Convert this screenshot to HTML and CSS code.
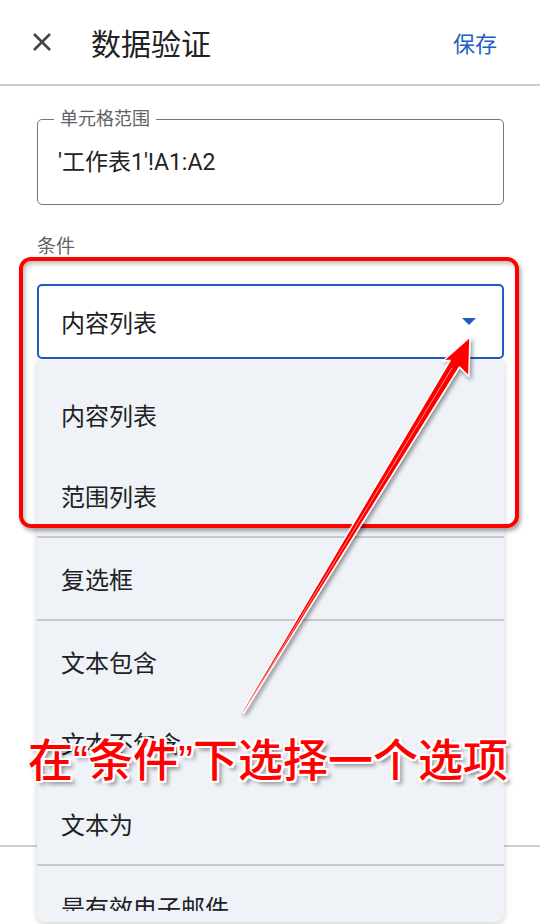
FILE: index.html
```html
<!DOCTYPE html>
<html lang="zh-CN">
<head>
    <meta charset="UTF-8">
    <meta name="viewport" content="width=device-width, initial-scale=1.0">
    <title>数据验证</title>
    <link rel="stylesheet" href="styles.css">
</head>
<body>
    <div class="page">
        <!-- Top bar -->
        <header class="topbar">
            <svg class="close-icon" width="20" height="20" viewBox="0 0 20 20">
                <path d="M2 2 L18 18 M18 2 L2 18" stroke="#444" stroke-width="2.6" fill="none"/>
            </svg>
            <h1 class="title">数据验证</h1>
            <button class="save-button">保存</button>
        </header>

        <main class="form">
            <fieldset class="range-field">
                <legend>单元格范围</legend>
                <div class="range-value">'工作表1'!A1:A2</div>
            </fieldset>

            <div class="field-label">条件</div>

            <div class="select-wrap">
                <div class="select-box">
                    <span>内容列表</span>
                    <span class="caret"></span>
                </div>

                <!-- Open dropdown -->
                <div class="menu">
                    <div class="menu-list">
                        <div class="menu-item">内容列表</div>
                        <div class="menu-item">范围列表</div>
                        <div class="menu-sep"></div>
                        <div class="menu-item">复选框</div>
                        <div class="menu-sep"></div>
                        <div class="menu-item">文本包含</div>
                        <div class="menu-item">文本不包含</div>
                        <div class="menu-item">文本为</div>
                        <div class="menu-sep"></div>
                        <div class="menu-item">是有效电子邮件</div>
                    </div>
                </div>
            </div>
        </main>

        <div class="footer-rule"></div>

        <!-- Annotations -->
        <div class="mark-box"></div>
        <svg class="mark-arrow" width="540" height="924" viewBox="0 0 540 924">
            <defs>
                <filter id="arrow-shadow" x="-20%" y="-20%" width="140%" height="140%">
                    <feDropShadow dx="2" dy="3" stdDeviation="2" flood-color="#000" flood-opacity="0.4"/>
                </filter>
            </defs>
            <polygon points="470,337 468.8,376.3 459.5,367 244,712.5 242,711.5 450,360.5 443.2,360.7"
                     fill="#ff0000" stroke="#fff" stroke-width="1.5" stroke-linejoin="round"
                     filter="url(#arrow-shadow)"/>
            <!-- highlight down the shaft -->
            <line x1="452" y1="368" x2="244" y2="711" stroke="#fff" stroke-width="0.8" opacity="0.7"/>
        </svg>
        <div class="mark-text">在“条件”下选择一个选项</div>
    </div>
</body>
</html>
```

FILE: styles.css
```css
body {
    margin: 0;
    font-family: Roboto, "Noto Sans CJK SC", sans-serif;
    background: #fff;
    color: #202124;
}

.page {
    position: relative;
    width: 540px;
    height: 924px;
    overflow: hidden;
}

.topbar {
    display: flex;
    align-items: center;
    height: 84px;
    padding: 0 43px 0 32px;
    border-bottom: 2px solid #cfcfcf;
}

.close-icon {
    display: block;
}

.title {
    flex: 1;
    margin: 0 0 0 39px;
    font-size: 30px;
    font-weight: 400;
    color: #222;
}

.save-button {
    border: none;
    background: none;
    padding: 0;
    font-family: inherit;
    font-size: 22px;
    color: #1f5ec6;
}

.form {
    padding: 0 36px 0 37px;
}

.range-field {
    margin: 23px 0 0;
    padding: 0 16px;
    min-width: 0;
    border: 1.5px solid #777;
    border-radius: 5px;
}

.range-field legend {
    padding: 0 6px;
    font-size: 18px;
    line-height: 20px;
    color: #5f6368;
}

.range-value {
    padding: 20px 4px 28px;
    font-size: 23px;
    line-height: 27px;
    color: #222;
}

.field-label {
    margin-top: 31px;
    font-size: 19px;
    line-height: 22px;
    color: #5f6368;
}

.select-wrap {
    position: relative;
    margin-top: 26px;
}

.select-box {
    display: flex;
    align-items: center;
    justify-content: space-between;
    height: 71px;
    padding: 0 26px 0 22px;
    border: 2px solid #1f5bc1;
    border-radius: 5px;
    font-size: 24px;
}

.caret {
    width: 0;
    height: 0;
    border-left: 7px solid transparent;
    border-right: 7px solid transparent;
    border-top: 7px solid #1f5bc1;
}

.menu {
    position: absolute;
    top: 76px;
    left: 0;
    right: 0;
    padding: 14px 0 11px;
    background: #eff2f7;
    border-radius: 0 0 8px 8px;
    box-shadow: 0 2px 6px rgba(0, 0, 0, 0.18);
}

.menu-list {
    height: 537px;
    overflow: hidden;
}

.menu-item {
    display: flex;
    align-items: center;
    height: 81px;
    padding-left: 24px;
    font-size: 24px;
    color: #202124;
}

.menu-sep {
    height: 2px;
    background: #c7c9ce;
}

.footer-rule {
    margin-top: 486px;
    border-top: 2px solid #cfcfcf;
}

.mark-box {
    position: absolute;
    left: 19px;
    top: 257px;
    width: 492px;
    height: 263px;
    border: 4px solid #ff0000;
    border-radius: 12px;
    box-shadow: 2px 3px 4px rgba(0, 0, 0, 0.35), inset 2px 3px 4px rgba(0, 0, 0, 0.25);
}

.mark-arrow {
    position: absolute;
    left: 0;
    top: 0;
    pointer-events: none;
}

.mark-text {
    position: absolute;
    left: 28px;
    top: 738px;
    font-family: "Liberation Sans", "Noto Sans CJK SC", sans-serif;
    font-size: 45px;
    font-weight: 500;
    line-height: 48px;
    color: #ff0000;
    white-space: nowrap;
    text-shadow:
        2px 0 0 #fff, -2px 0 0 #fff, 0 2px 0 #fff, 0 -2px 0 #fff,
        2px 2px 0 #fff, -2px -2px 0 #fff, 2px -2px 0 #fff, -2px 2px 0 #fff,
        4px 4px 4px rgba(0, 0, 0, 0.45);
}
```
